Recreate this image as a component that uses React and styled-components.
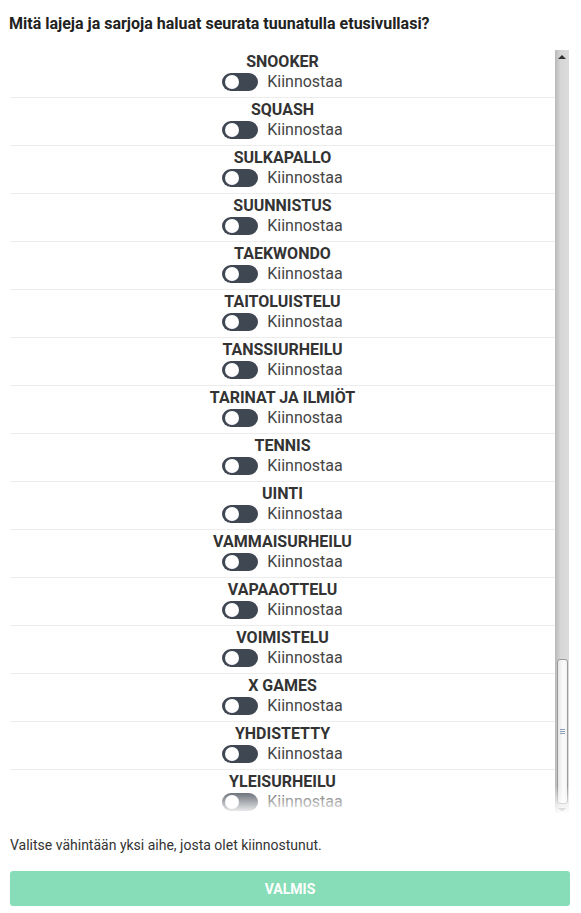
import styled, { createGlobalStyle } from "styled-components";

const GlobalStyle = createGlobalStyle`
  body {
    margin: 0;
    background: #fff;
    font-family: Roboto, "Liberation Sans", sans-serif;
  }
`;

const Page = styled.div`
  width: 581px;
  height: 913px;
  padding: 14px 12px 0 10px;
  box-sizing: border-box;
`;

const Heading = styled.h1`
  margin: 0 0 0 -1px;
  font-size: 16px;
  line-height: 20px;
  font-weight: 700;
  color: #222;
`;

const ListFrame = styled.div`
  position: relative;
  display: flex;
  height: 766px;
  margin-top: 16px;
`;

const List = styled.div`
  flex: 1;
  overflow: hidden;
`;

const Row = styled.div`
  display: flex;
  flex-direction: column;
  align-items: center;
  padding: 2px 0 5px;
  border-bottom: 1px solid #ececec;
`;

const SportName = styled.div`
  font-size: 16px;
  line-height: 19px;
  font-weight: 700;
  color: #333;
`;

const Control = styled.label`
  display: flex;
  align-items: center;
  gap: 9px;
  height: 20px;
  line-height: 20px;
  padding-top: 1px;
`;

const Switch = styled.span`
  position: relative;
  width: 36px;
  height: 18px;
  border-radius: 9px;
  background: #3f4752;
`;

const Knob = styled.span`
  position: absolute;
  left: 3px;
  top: 2px;
  width: 14px;
  height: 14px;
  border-radius: 50%;
  background: #fff;
`;

const Label = styled.span`
  font-size: 16px;
  color: #444;
`;

const Fade = styled.div`
  position: absolute;
  left: 0;
  right: 0;
  bottom: 0;
  height: 30px;
  background: linear-gradient(rgba(255, 255, 255, 0), #fff 95%);
  pointer-events: none;
`;

const Scrollbar = styled.div`
  width: 14px;
  display: flex;
  flex-direction: column;
  align-items: center;
  background: linear-gradient(to right, #b9b9b9, #d6d6d6 40%, #dcdcdc);
  padding: 5px 0 4px;
  box-sizing: border-box;
`;

const Arrow = styled.div`
  width: 0;
  height: 0;
  border-left: 4px solid transparent;
  border-right: 4px solid transparent;
  ${(p) =>
    p.$down ? "border-top: 4px solid #555;" : "border-bottom: 4px solid #333;"}
`;

const Track = styled.div`
  flex: 1;
  width: 100%;
  display: flex;
  flex-direction: column;
  justify-content: flex-end;
  align-items: center;
  padding: 0 0 4px;
`;

const Thumb = styled.div`
  width: 11px;
  height: 145px;
  box-sizing: border-box;
  border: 1px solid #9a9a9a;
  border-radius: 3px;
  background: linear-gradient(to right, #e6e6e6, #fbfbfb 60%, #f2f2f2);
  display: flex;
  align-items: center;
  justify-content: center;
`;

const Grip = styled.div`
  width: 5px;
  height: 5px;
  background: repeating-linear-gradient(#8aa0b8 0 1px, transparent 1px 2px);
`;

const Hint = styled.p`
  margin: 20px 0 0;
  font-size: 14px;
  line-height: 18px;
  color: #333;
`;

const Button = styled.button`
  display: block;
  width: 560px;
  height: 35px;
  margin: 17px 0 0;
  border: none;
  border-radius: 3px;
  background: #86ddb7;
  color: #fff;
  font-family: Roboto, "Liberation Sans", sans-serif;
  font-size: 14px;
  font-weight: 700;
`;

const sports = [
  "SNOOKER",
  "SQUASH",
  "SULKAPALLO",
  "SUUNNISTUS",
  "TAEKWONDO",
  "TAITOLUISTELU",
  "TANSSIURHEILU",
  "TARINAT JA ILMIÖT",
  "TENNIS",
  "UINTI",
  "VAMMAISURHEILU",
  "VAPAAOTTELU",
  "VOIMISTELU",
  "X GAMES",
  "YHDISTETTY",
  "YLEISURHEILU",
];

function App() {
  return (
    <>
      <GlobalStyle />
      <Page>
        <Heading>Mitä lajeja ja sarjoja haluat seurata tuunatulla etusivullasi?</Heading>
        <ListFrame>
          <List>
            {sports.map((name) => (
              <Row key={name}>
                <SportName>{name}</SportName>
                <Control>
                  <Switch>
                    <Knob />
                  </Switch>
                  <Label>Kiinnostaa</Label>
                </Control>
              </Row>
            ))}
          </List>
          <Scrollbar>
            <Arrow />
            <Track>
              <Thumb>
                <Grip />
              </Thumb>
            </Track>
            <Arrow $down />
          </Scrollbar>
          <Fade />
        </ListFrame>
        <Hint>Valitse vähintään yksi aihe, josta olet kiinnostunut.</Hint>
        <Button>VALMIS</Button>
      </Page>
    </>
  );
}

export default App;
